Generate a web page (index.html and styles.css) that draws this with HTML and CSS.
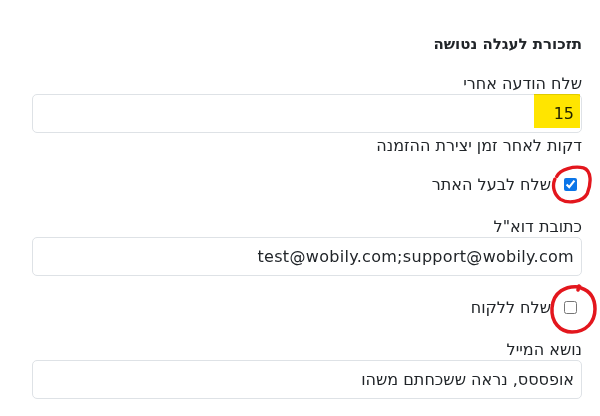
FILE: index.html
```html
<!DOCTYPE html>
<html lang="he" dir="rtl">
  <head>
    <meta charset="UTF-8" />
    <meta name="viewport" content="width=device-width, initial-scale=1.0" />
    <title>תזכורת לעגלה נטושה</title>
    <link rel="stylesheet" href="styles.css">
  </head>
  <body>
    <form class="settings">
      <h6 class="section-title">תזכורת לעגלה נטושה</h6>

      <div class="field with-hint">
        <label class="field-label" for="delay">שלח הודעה אחרי</label>
        <div class="input-wrap">
          <input id="delay" class="form-input" type="text" value="15" />
          <span class="marker"></span>
        </div>
        <small class="hint">דקות לאחר זמן יצירת ההזמנה</small>
      </div>

      <div class="check-row">
        <input id="notifyOwner" class="check" type="checkbox" checked />
        <label for="notifyOwner">שלח לבעל האתר</label>
        <!-- סימון ביד -->
        <svg class="scribble scribble-one" viewBox="0 0 44 42" aria-hidden="true">
          <path d="M6 12 C10 4 24 1 34 3 C43 6 42 20 38 30 C33 39 18 41 10 36 C3 31 1 22 4 15" />
        </svg>
      </div>

      <div class="field">
        <label class="field-label" for="email">כתובת דוא"ל</label>
        <input id="email" class="form-input latin" type="text" dir="ltr" value="test@wobily.com;support@wobily.com" />
      </div>

      <div class="check-row">
        <input id="notifyCustomer" class="check" type="checkbox" />
        <label for="notifyCustomer">שלח ללקוח</label>
        <svg class="scribble scribble-two" viewBox="0 0 50 54" aria-hidden="true">
          <path d="M32 5 C18 3 5 10 4 26 C3 40 12 50 24 50 C38 50 47 40 47 27 C47 16 42 9 33 6" />
          <path d="M30 8 L31 4" />
        </svg>
      </div>

      <div class="field">
        <label class="field-label" for="subject">נושא המייל</label>
        <input id="subject" class="form-input" type="text" value="אופססס, נראה ששכחתם משהו" />
      </div>
    </form>
  </body>
</html>
```

FILE: styles.css
```css
body {
  margin: 0;
  background-color: #ffffff;
  color: #212529;
  font-family: "DejaVu Sans", sans-serif;
  font-size: 16px;
}
.settings {
  display: flex;
  flex-direction: column;
  padding: 34px 18px 0 32px;
}
.section-title {
  margin: 0 0 21px;
  font-size: 15px;
  font-weight: bold;
  line-height: 20px;
}
.field {
  display: flex;
  flex-direction: column;
  margin-bottom: 19px;
}
.field.with-hint {
  margin-bottom: 13px;
}
.field-label {
  line-height: 18px;
  margin-bottom: 1px;
}
.input-wrap {
  position: relative;
}
.form-input {
  box-sizing: border-box;
  width: 100%;
  height: 39px;
  padding: 0 7px;
  font-family: inherit;
  font-size: 16px;
  color: #212529;
  background: #ffffff;
  border: 1px solid #dee2e6;
  border-radius: 5px;
  text-align: right;
}
.form-input.latin {
  letter-spacing: 0.3px;
}
/* סימון צהוב על הערך */
.marker {
  position: absolute;
  top: 0;
  right: 2px;
  width: 46px;
  height: 34px;
  background: #ffe500;
  mix-blend-mode: multiply;
}
.hint {
  font-size: 16px;
  line-height: 26px;
}
.check-row {
  position: relative;
  display: flex;
  align-items: center;
  gap: 13px;
  height: 24px;
  margin-bottom: 22px;
  padding-right: 5px;
}
.check {
  width: 13px;
  height: 13px;
  margin: 0;
  accent-color: #0b75e8;
}
.scribble {
  position: absolute;
  fill: none;
  stroke: #e3161d;
  stroke-width: 3.5;
  stroke-linecap: round;
}
.scribble-one {
  top: -8px;
  right: -11px;
  width: 42px;
  height: 42px;
}
.scribble-two {
  top: -13px;
  right: -16px;
  width: 50px;
  height: 54px;
}
```
